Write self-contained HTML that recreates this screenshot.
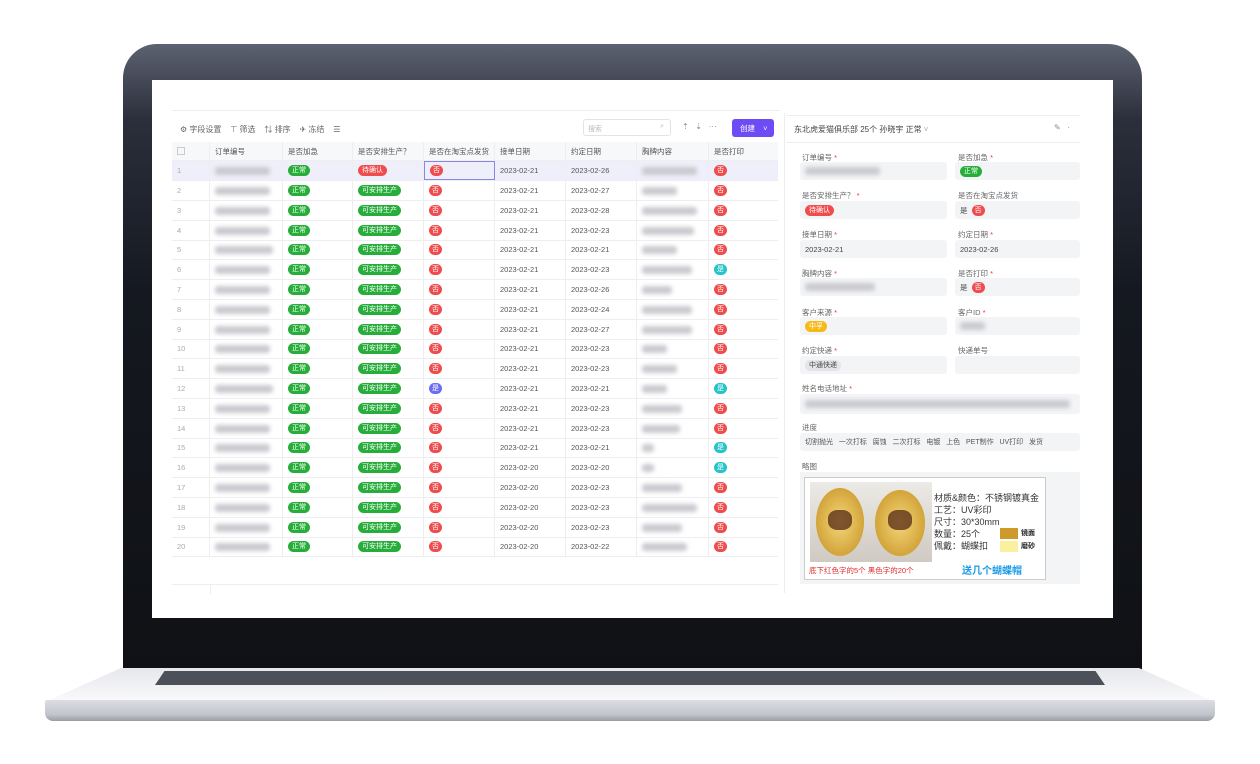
<!DOCTYPE html>
<html><head><meta charset="utf-8"><style>
*{box-sizing:border-box;margin:0;padding:0}
body{width:1260px;height:764px;background:#fff;position:relative;overflow:hidden;font-family:"Liberation Sans","Noto Sans CJK SC",sans-serif;color:#555}
.bezel{position:absolute;left:123px;top:44px;width:1019px;height:626px;border-radius:34px 34px 0 0;background:linear-gradient(180deg,#5d6272 0%,#2b2f3b 12%,#151820 40%,#0f1115 100%)}
.deck{position:absolute;left:45px;top:668px;width:1170px;height:34px;background:linear-gradient(180deg,#e6e7ec,#fafafc);clip-path:polygon(6.5% 0,93.5% 0,100% 100%,0 100%)}
.front{position:absolute;left:45px;top:700px;width:1170px;height:21px;border-radius:2px 2px 8px 8px;background:linear-gradient(180deg,#dcdde3,#c2c4cd 70%,#9a9ca4)}
.kb{position:absolute;left:155px;top:671px;width:950px;height:14px;background:#4c5059;clip-path:polygon(1% 0,99% 0,100% 100%,0 100%)}
.screen{position:absolute;left:152px;top:80px;width:961px;height:538px;background:#fff;overflow:hidden;font-size:8px}
.a{position:absolute}
.tb{color:#666;font-size:8px}
.hd,.row{position:absolute;left:20px;width:606px;height:20px;border-bottom:1px solid #eee}
.hd{background:#f7f8fa;top:62px;height:19px}
.c{position:absolute;top:0;height:100%;border-right:1px solid #eee;display:flex;align-items:center;padding-left:5px;font-size:7.5px;color:#555}
.row.sel{background:#efeefb}
.g{display:inline-block;height:11px;line-height:11px;border-radius:6px;color:#fff;font-size:7px;padding:0 4px}
.gr{background:#27ae3a}.rd{background:#ef4d4d}.bl{background:#6b6cf2}.te{background:#24c4c8}
.dot{display:inline-block;width:13px;height:11px;line-height:11px;border-radius:6px;color:#fff;font-size:7px;text-align:center}
.blur{display:inline-block;height:8px;background:#c9cacf;filter:blur(2.2px);border-radius:3px}
.lbl{position:absolute;font-size:7.5px;color:#666}
.lbl b{color:#e33;font-weight:normal}
.box{position:absolute;height:18px;background:#f3f4f6;border-radius:3px;display:flex;align-items:center;padding-left:5px;font-size:7.5px;color:#444}
</style></head><body>
<div class="bezel"></div>
<div class="deck"></div>
<div class="kb"></div>
<div class="front"></div>
<div class="screen">
 <div class="a" style="left:20px;top:30px;width:608px;height:1px;background:#eee"></div>
 <div class="a" style="left:632px;top:33px;width:1px;height:480px;background:#eee"></div>
 <div class="a tb" style="left:28px;top:44px">⚙ 字段设置 &nbsp;&nbsp; ⊤ 筛选 &nbsp;&nbsp; ⇅ 排序 &nbsp;&nbsp; ✈ 冻结 &nbsp;&nbsp; ☰</div>
 <div class="a" style="left:431px;top:39px;width:88px;height:17px;border:1px solid #e3e3e3;border-radius:3px;font-size:7px;color:#bbb;padding:4px 4px">搜索<span style="position:absolute;right:6px;top:3px">⌕</span></div>
 <div class="a tb" style="left:530px;top:42px;color:#888">⇡ &nbsp; ⇣ &nbsp; ···</div>
 <div class="a" style="left:580px;top:39px;width:42px;height:18px;background:#6e4cf5;border-radius:3px;color:#fff;font-size:7.5px;padding:4px 0 0 8px">创建 <span style="margin-left:6px">˅</span></div>
 <div class="hd"><div class="c" style="left:0;width:38px"><span style="width:8px;height:8px;border:1px solid #ccc;display:inline-block"></span></div><div class="c" style="left:38px;width:73px">订单编号</div><div class="c" style="left:111px;width:70px">是否加急</div><div class="c" style="left:181px;width:71px">是否安排生产？</div><div class="c" style="left:252px;width:71px">是否在淘宝点发货</div><div class="c" style="left:323px;width:71px">接单日期</div><div class="c" style="left:394px;width:71px">约定日期</div><div class="c" style="left:465px;width:72px">胸牌内容</div><div class="c" style="left:537px;width:69px;border:0">是否打印</div></div>
 <div id="rows"></div>
 <!-- rows -->
 <div class="row sel" style="top:81px"><div class="c" style="left:0;width:38px;color:#aaa">1</div><div class="c" style="left:38px;width:73px"><span class="blur" style="width:55px"></span></div><div class="c" style="left:111px;width:70px"><span class="g gr">正常</span></div><div class="c" style="left:181px;width:71px"><span class="g rd">待确认</span></div><div class="c" style="left:252px;width:71px;border:1px solid #8a86e8"><span class="dot rd">否</span></div><div class="c" style="left:323px;width:71px">2023-02-21</div><div class="c" style="left:394px;width:71px">2023-02-26</div><div class="c" style="left:465px;width:72px"><span class="blur" style="width:55px"></span></div><div class="c" style="left:537px;width:69px;border:0"><span class="dot rd">否</span></div></div>
 <div class="row" style="top:101px"><div class="c" style="left:0;width:38px;color:#aaa">2</div><div class="c" style="left:38px;width:73px"><span class="blur" style="width:55px"></span></div><div class="c" style="left:111px;width:70px"><span class="g gr">正常</span></div><div class="c" style="left:181px;width:71px"><span class="g gr">可安排生产</span></div><div class="c" style="left:252px;width:71px"><span class="dot rd">否</span></div><div class="c" style="left:323px;width:71px">2023-02-21</div><div class="c" style="left:394px;width:71px">2023-02-27</div><div class="c" style="left:465px;width:72px"><span class="blur" style="width:35px"></span></div><div class="c" style="left:537px;width:69px;border:0"><span class="dot rd">否</span></div></div>
 <div class="row" style="top:121px"><div class="c" style="left:0;width:38px;color:#aaa">3</div><div class="c" style="left:38px;width:73px"><span class="blur" style="width:55px"></span></div><div class="c" style="left:111px;width:70px"><span class="g gr">正常</span></div><div class="c" style="left:181px;width:71px"><span class="g gr">可安排生产</span></div><div class="c" style="left:252px;width:71px"><span class="dot rd">否</span></div><div class="c" style="left:323px;width:71px">2023-02-21</div><div class="c" style="left:394px;width:71px">2023-02-28</div><div class="c" style="left:465px;width:72px"><span class="blur" style="width:55px"></span></div><div class="c" style="left:537px;width:69px;border:0"><span class="dot rd">否</span></div></div>
 <div class="row" style="top:141px"><div class="c" style="left:0;width:38px;color:#aaa">4</div><div class="c" style="left:38px;width:73px"><span class="blur" style="width:55px"></span></div><div class="c" style="left:111px;width:70px"><span class="g gr">正常</span></div><div class="c" style="left:181px;width:71px"><span class="g gr">可安排生产</span></div><div class="c" style="left:252px;width:71px"><span class="dot rd">否</span></div><div class="c" style="left:323px;width:71px">2023-02-21</div><div class="c" style="left:394px;width:71px">2023-02-23</div><div class="c" style="left:465px;width:72px"><span class="blur" style="width:52px"></span></div><div class="c" style="left:537px;width:69px;border:0"><span class="dot rd">否</span></div></div>
 <div class="row" style="top:160px"><div class="c" style="left:0;width:38px;color:#aaa">5</div><div class="c" style="left:38px;width:73px"><span class="blur" style="width:58px"></span></div><div class="c" style="left:111px;width:70px"><span class="g gr">正常</span></div><div class="c" style="left:181px;width:71px"><span class="g gr">可安排生产</span></div><div class="c" style="left:252px;width:71px"><span class="dot rd">否</span></div><div class="c" style="left:323px;width:71px">2023-02-21</div><div class="c" style="left:394px;width:71px">2023-02-21</div><div class="c" style="left:465px;width:72px"><span class="blur" style="width:35px"></span></div><div class="c" style="left:537px;width:69px;border:0"><span class="dot rd">否</span></div></div>
 <div class="row" style="top:180px"><div class="c" style="left:0;width:38px;color:#aaa">6</div><div class="c" style="left:38px;width:73px"><span class="blur" style="width:55px"></span></div><div class="c" style="left:111px;width:70px"><span class="g gr">正常</span></div><div class="c" style="left:181px;width:71px"><span class="g gr">可安排生产</span></div><div class="c" style="left:252px;width:71px"><span class="dot rd">否</span></div><div class="c" style="left:323px;width:71px">2023-02-21</div><div class="c" style="left:394px;width:71px">2023-02-23</div><div class="c" style="left:465px;width:72px"><span class="blur" style="width:50px"></span></div><div class="c" style="left:537px;width:69px;border:0"><span class="dot te">是</span></div></div>
 <div class="row" style="top:200px"><div class="c" style="left:0;width:38px;color:#aaa">7</div><div class="c" style="left:38px;width:73px"><span class="blur" style="width:55px"></span></div><div class="c" style="left:111px;width:70px"><span class="g gr">正常</span></div><div class="c" style="left:181px;width:71px"><span class="g gr">可安排生产</span></div><div class="c" style="left:252px;width:71px"><span class="dot rd">否</span></div><div class="c" style="left:323px;width:71px">2023-02-21</div><div class="c" style="left:394px;width:71px">2023-02-26</div><div class="c" style="left:465px;width:72px"><span class="blur" style="width:30px"></span></div><div class="c" style="left:537px;width:69px;border:0"><span class="dot rd">否</span></div></div>
 <div class="row" style="top:220px"><div class="c" style="left:0;width:38px;color:#aaa">8</div><div class="c" style="left:38px;width:73px"><span class="blur" style="width:55px"></span></div><div class="c" style="left:111px;width:70px"><span class="g gr">正常</span></div><div class="c" style="left:181px;width:71px"><span class="g gr">可安排生产</span></div><div class="c" style="left:252px;width:71px"><span class="dot rd">否</span></div><div class="c" style="left:323px;width:71px">2023-02-21</div><div class="c" style="left:394px;width:71px">2023-02-24</div><div class="c" style="left:465px;width:72px"><span class="blur" style="width:50px"></span></div><div class="c" style="left:537px;width:69px;border:0"><span class="dot rd">否</span></div></div>
 <div class="row" style="top:240px"><div class="c" style="left:0;width:38px;color:#aaa">9</div><div class="c" style="left:38px;width:73px"><span class="blur" style="width:55px"></span></div><div class="c" style="left:111px;width:70px"><span class="g gr">正常</span></div><div class="c" style="left:181px;width:71px"><span class="g gr">可安排生产</span></div><div class="c" style="left:252px;width:71px"><span class="dot rd">否</span></div><div class="c" style="left:323px;width:71px">2023-02-21</div><div class="c" style="left:394px;width:71px">2023-02-27</div><div class="c" style="left:465px;width:72px"><span class="blur" style="width:50px"></span></div><div class="c" style="left:537px;width:69px;border:0"><span class="dot rd">否</span></div></div>
 <div class="row" style="top:259px"><div class="c" style="left:0;width:38px;color:#aaa">10</div><div class="c" style="left:38px;width:73px"><span class="blur" style="width:55px"></span></div><div class="c" style="left:111px;width:70px"><span class="g gr">正常</span></div><div class="c" style="left:181px;width:71px"><span class="g gr">可安排生产</span></div><div class="c" style="left:252px;width:71px"><span class="dot rd">否</span></div><div class="c" style="left:323px;width:71px">2023-02-21</div><div class="c" style="left:394px;width:71px">2023-02-23</div><div class="c" style="left:465px;width:72px"><span class="blur" style="width:25px"></span></div><div class="c" style="left:537px;width:69px;border:0"><span class="dot rd">否</span></div></div>
 <div class="row" style="top:279px"><div class="c" style="left:0;width:38px;color:#aaa">11</div><div class="c" style="left:38px;width:73px"><span class="blur" style="width:55px"></span></div><div class="c" style="left:111px;width:70px"><span class="g gr">正常</span></div><div class="c" style="left:181px;width:71px"><span class="g gr">可安排生产</span></div><div class="c" style="left:252px;width:71px"><span class="dot rd">否</span></div><div class="c" style="left:323px;width:71px">2023-02-21</div><div class="c" style="left:394px;width:71px">2023-02-23</div><div class="c" style="left:465px;width:72px"><span class="blur" style="width:35px"></span></div><div class="c" style="left:537px;width:69px;border:0"><span class="dot rd">否</span></div></div>
 <div class="row" style="top:299px"><div class="c" style="left:0;width:38px;color:#aaa">12</div><div class="c" style="left:38px;width:73px"><span class="blur" style="width:58px"></span></div><div class="c" style="left:111px;width:70px"><span class="g gr">正常</span></div><div class="c" style="left:181px;width:71px"><span class="g gr">可安排生产</span></div><div class="c" style="left:252px;width:71px"><span class="dot bl">是</span></div><div class="c" style="left:323px;width:71px">2023-02-21</div><div class="c" style="left:394px;width:71px">2023-02-21</div><div class="c" style="left:465px;width:72px"><span class="blur" style="width:25px"></span></div><div class="c" style="left:537px;width:69px;border:0"><span class="dot te">是</span></div></div>
 <div class="row" style="top:319px"><div class="c" style="left:0;width:38px;color:#aaa">13</div><div class="c" style="left:38px;width:73px"><span class="blur" style="width:55px"></span></div><div class="c" style="left:111px;width:70px"><span class="g gr">正常</span></div><div class="c" style="left:181px;width:71px"><span class="g gr">可安排生产</span></div><div class="c" style="left:252px;width:71px"><span class="dot rd">否</span></div><div class="c" style="left:323px;width:71px">2023-02-21</div><div class="c" style="left:394px;width:71px">2023-02-23</div><div class="c" style="left:465px;width:72px"><span class="blur" style="width:40px"></span></div><div class="c" style="left:537px;width:69px;border:0"><span class="dot rd">否</span></div></div>
 <div class="row" style="top:339px"><div class="c" style="left:0;width:38px;color:#aaa">14</div><div class="c" style="left:38px;width:73px"><span class="blur" style="width:55px"></span></div><div class="c" style="left:111px;width:70px"><span class="g gr">正常</span></div><div class="c" style="left:181px;width:71px"><span class="g gr">可安排生产</span></div><div class="c" style="left:252px;width:71px"><span class="dot rd">否</span></div><div class="c" style="left:323px;width:71px">2023-02-21</div><div class="c" style="left:394px;width:71px">2023-02-23</div><div class="c" style="left:465px;width:72px"><span class="blur" style="width:38px"></span></div><div class="c" style="left:537px;width:69px;border:0"><span class="dot rd">否</span></div></div>
 <div class="row" style="top:358px"><div class="c" style="left:0;width:38px;color:#aaa">15</div><div class="c" style="left:38px;width:73px"><span class="blur" style="width:55px"></span></div><div class="c" style="left:111px;width:70px"><span class="g gr">正常</span></div><div class="c" style="left:181px;width:71px"><span class="g gr">可安排生产</span></div><div class="c" style="left:252px;width:71px"><span class="dot rd">否</span></div><div class="c" style="left:323px;width:71px">2023-02-21</div><div class="c" style="left:394px;width:71px">2023-02-21</div><div class="c" style="left:465px;width:72px"><span class="blur" style="width:12px"></span></div><div class="c" style="left:537px;width:69px;border:0"><span class="dot te">是</span></div></div>
 <div class="row" style="top:378px"><div class="c" style="left:0;width:38px;color:#aaa">16</div><div class="c" style="left:38px;width:73px"><span class="blur" style="width:55px"></span></div><div class="c" style="left:111px;width:70px"><span class="g gr">正常</span></div><div class="c" style="left:181px;width:71px"><span class="g gr">可安排生产</span></div><div class="c" style="left:252px;width:71px"><span class="dot rd">否</span></div><div class="c" style="left:323px;width:71px">2023-02-20</div><div class="c" style="left:394px;width:71px">2023-02-20</div><div class="c" style="left:465px;width:72px"><span class="blur" style="width:12px"></span></div><div class="c" style="left:537px;width:69px;border:0"><span class="dot te">是</span></div></div>
 <div class="row" style="top:398px"><div class="c" style="left:0;width:38px;color:#aaa">17</div><div class="c" style="left:38px;width:73px"><span class="blur" style="width:55px"></span></div><div class="c" style="left:111px;width:70px"><span class="g gr">正常</span></div><div class="c" style="left:181px;width:71px"><span class="g gr">可安排生产</span></div><div class="c" style="left:252px;width:71px"><span class="dot rd">否</span></div><div class="c" style="left:323px;width:71px">2023-02-20</div><div class="c" style="left:394px;width:71px">2023-02-23</div><div class="c" style="left:465px;width:72px"><span class="blur" style="width:40px"></span></div><div class="c" style="left:537px;width:69px;border:0"><span class="dot rd">否</span></div></div>
 <div class="row" style="top:418px"><div class="c" style="left:0;width:38px;color:#aaa">18</div><div class="c" style="left:38px;width:73px"><span class="blur" style="width:55px"></span></div><div class="c" style="left:111px;width:70px"><span class="g gr">正常</span></div><div class="c" style="left:181px;width:71px"><span class="g gr">可安排生产</span></div><div class="c" style="left:252px;width:71px"><span class="dot rd">否</span></div><div class="c" style="left:323px;width:71px">2023-02-20</div><div class="c" style="left:394px;width:71px">2023-02-23</div><div class="c" style="left:465px;width:72px"><span class="blur" style="width:55px"></span></div><div class="c" style="left:537px;width:69px;border:0"><span class="dot rd">否</span></div></div>
 <div class="row" style="top:438px"><div class="c" style="left:0;width:38px;color:#aaa">19</div><div class="c" style="left:38px;width:73px"><span class="blur" style="width:55px"></span></div><div class="c" style="left:111px;width:70px"><span class="g gr">正常</span></div><div class="c" style="left:181px;width:71px"><span class="g gr">可安排生产</span></div><div class="c" style="left:252px;width:71px"><span class="dot rd">否</span></div><div class="c" style="left:323px;width:71px">2023-02-20</div><div class="c" style="left:394px;width:71px">2023-02-23</div><div class="c" style="left:465px;width:72px"><span class="blur" style="width:40px"></span></div><div class="c" style="left:537px;width:69px;border:0"><span class="dot rd">否</span></div></div>
 <div class="row" style="top:457px"><div class="c" style="left:0;width:38px;color:#aaa">20</div><div class="c" style="left:38px;width:73px"><span class="blur" style="width:55px"></span></div><div class="c" style="left:111px;width:70px"><span class="g gr">正常</span></div><div class="c" style="left:181px;width:71px"><span class="g gr">可安排生产</span></div><div class="c" style="left:252px;width:71px"><span class="dot rd">否</span></div><div class="c" style="left:323px;width:71px">2023-02-20</div><div class="c" style="left:394px;width:71px">2023-02-22</div><div class="c" style="left:465px;width:72px"><span class="blur" style="width:45px"></span></div><div class="c" style="left:537px;width:69px;border:0"><span class="dot rd">否</span></div></div>
 <div class="a" style="left:20px;top:504px;width:606px;height:1px;background:#eee"></div>
 <div class="a" style="left:58px;top:504px;width:1px;height:10px;background:#eee"></div>

 <!-- right panel -->
 <div class="a" style="left:634px;top:35px;width:294px;height:1px;background:#eee"></div>
 <div class="a" style="left:634px;top:62px;width:294px;height:1px;background:#eee"></div>
 <div class="a" style="left:642px;top:44px;font-size:8px;color:#444">东北虎爱猫俱乐部 25个 孙晓宇 正常 <span style="color:#aaa">˅</span></div>
 <div class="a" style="left:902px;top:43px;font-size:8px;color:#888">✎ &nbsp; ·</div>
 <div class="lbl" style="left:650px;top:72px">订单编号 <b>*</b></div><div class="box" style="left:648px;top:82px;width:147px"><span class="blur" style="width:75px"></span></div>
 <div class="lbl" style="left:806px;top:72px">是否加急 <b>*</b></div><div class="box" style="left:803px;top:82px;width:125px"><span class="g gr">正常</span></div>
 <div class="lbl" style="left:650px;top:110px">是否安排生产？ <b>*</b></div><div class="box" style="left:648px;top:121px;width:147px"><span class="g rd">待确认</span></div>
 <div class="lbl" style="left:806px;top:110px">是否在淘宝点发货</div><div class="box" style="left:803px;top:121px;width:125px">是 &nbsp;<span class="dot rd">否</span></div>
 <div class="lbl" style="left:650px;top:149px">接单日期 <b>*</b></div><div class="box" style="left:648px;top:160px;width:147px">2023-02-21</div>
 <div class="lbl" style="left:806px;top:149px">约定日期 <b>*</b></div><div class="box" style="left:803px;top:160px;width:125px">2023-02-26</div>
 <div class="lbl" style="left:650px;top:188px">胸牌内容 <b>*</b></div><div class="box" style="left:648px;top:198px;width:147px"><span class="blur" style="width:70px"></span></div>
 <div class="lbl" style="left:806px;top:188px">是否打印 <b>*</b></div><div class="box" style="left:803px;top:198px;width:125px">是 &nbsp;<span class="dot rd">否</span></div>
 <div class="lbl" style="left:650px;top:227px">客户来源 <b>*</b></div><div class="box" style="left:648px;top:237px;width:147px"><span class="g" style="background:#f7b918">中孚</span></div>
 <div class="lbl" style="left:806px;top:227px">客户ID <b>*</b></div><div class="box" style="left:803px;top:237px;width:125px"><span class="blur" style="width:25px"></span></div>
 <div class="lbl" style="left:650px;top:265px">约定快递 <b>*</b></div><div class="box" style="left:648px;top:276px;width:147px"><span class="g" style="background:#e4e5e8;color:#444">中通快递</span></div>
 <div class="lbl" style="left:806px;top:265px">快递单号</div><div class="box" style="left:803px;top:276px;width:125px"></div>
 <div class="lbl" style="left:650px;top:303px">姓名电话地址 <b>*</b></div><div class="box" style="left:648px;top:314px;width:280px;height:20px"><span class="blur" style="width:265px"></span></div>
 <div class="lbl" style="left:650px;top:342px">进度</div><div class="box" style="left:648px;top:353px;width:280px;font-size:7px;color:#555;white-space:nowrap;overflow:hidden">切割抛光 &nbsp; 一次打标 &nbsp; 腐蚀 &nbsp; 二次打标 &nbsp; 电镀 &nbsp; 上色 &nbsp; PET制作 &nbsp; UV打印 &nbsp; 发货</div>
 <div class="lbl" style="left:650px;top:381px">略图</div>
 <div class="a" style="left:648px;top:392px;width:280px;height:112px;background:#f3f4f6"></div>
 <div class="a" style="left:652px;top:397px;width:242px;height:103px;background:#fff;border:1px solid #ccc">
  <div class="a" style="left:5px;top:4px;width:122px;height:80px;background:linear-gradient(180deg,#eceae6,#cfcac2)"></div>
  <div class="a" style="left:11px;top:10px;width:48px;height:68px;border-radius:50%;background:radial-gradient(#f4d77a,#d3a43a 70%,#8a6312);"></div>
  <div class="a" style="left:70px;top:12px;width:50px;height:66px;border-radius:50%;background:radial-gradient(#f4d77a,#d3a43a 70%,#8a6312);"></div>
  <div class="a" style="left:23px;top:32px;width:24px;height:20px;background:#4a1e10;border-radius:40%;opacity:.7"></div>
  <div class="a" style="left:83px;top:32px;width:24px;height:20px;background:#4a1e10;border-radius:40%;opacity:.7"></div>
  <div class="a" style="left:4px;top:87px;font-size:7.5px;color:#e02a2a;white-space:nowrap">底下红色字的5个 黑色字的20个</div>
  <div class="a" style="left:129px;top:14px;font-size:9px;color:#333;line-height:12px;white-space:nowrap">材质&amp;颜色：不锈钢镀真金<br>工艺：UV彩印<br>尺寸：30*30mm<br>数量：25个<br>佩戴：蝴蝶扣</div>
  <div class="a" style="left:195px;top:50px;width:18px;height:11px;background:#cf9a2c"></div><div class="a" style="left:216px;top:50px;font-size:7px;color:#222;font-weight:bold">镜面</div>
  <div class="a" style="left:195px;top:63px;width:18px;height:11px;background:#faf0a0"></div><div class="a" style="left:216px;top:63px;font-size:7px;color:#222;font-weight:bold">磨砂</div>
  <div class="a" style="left:157px;top:84px;font-size:10px;color:#1a9be6;font-weight:bold">送几个蝴蝶帽</div>
 </div>
</div>
</body></html>
